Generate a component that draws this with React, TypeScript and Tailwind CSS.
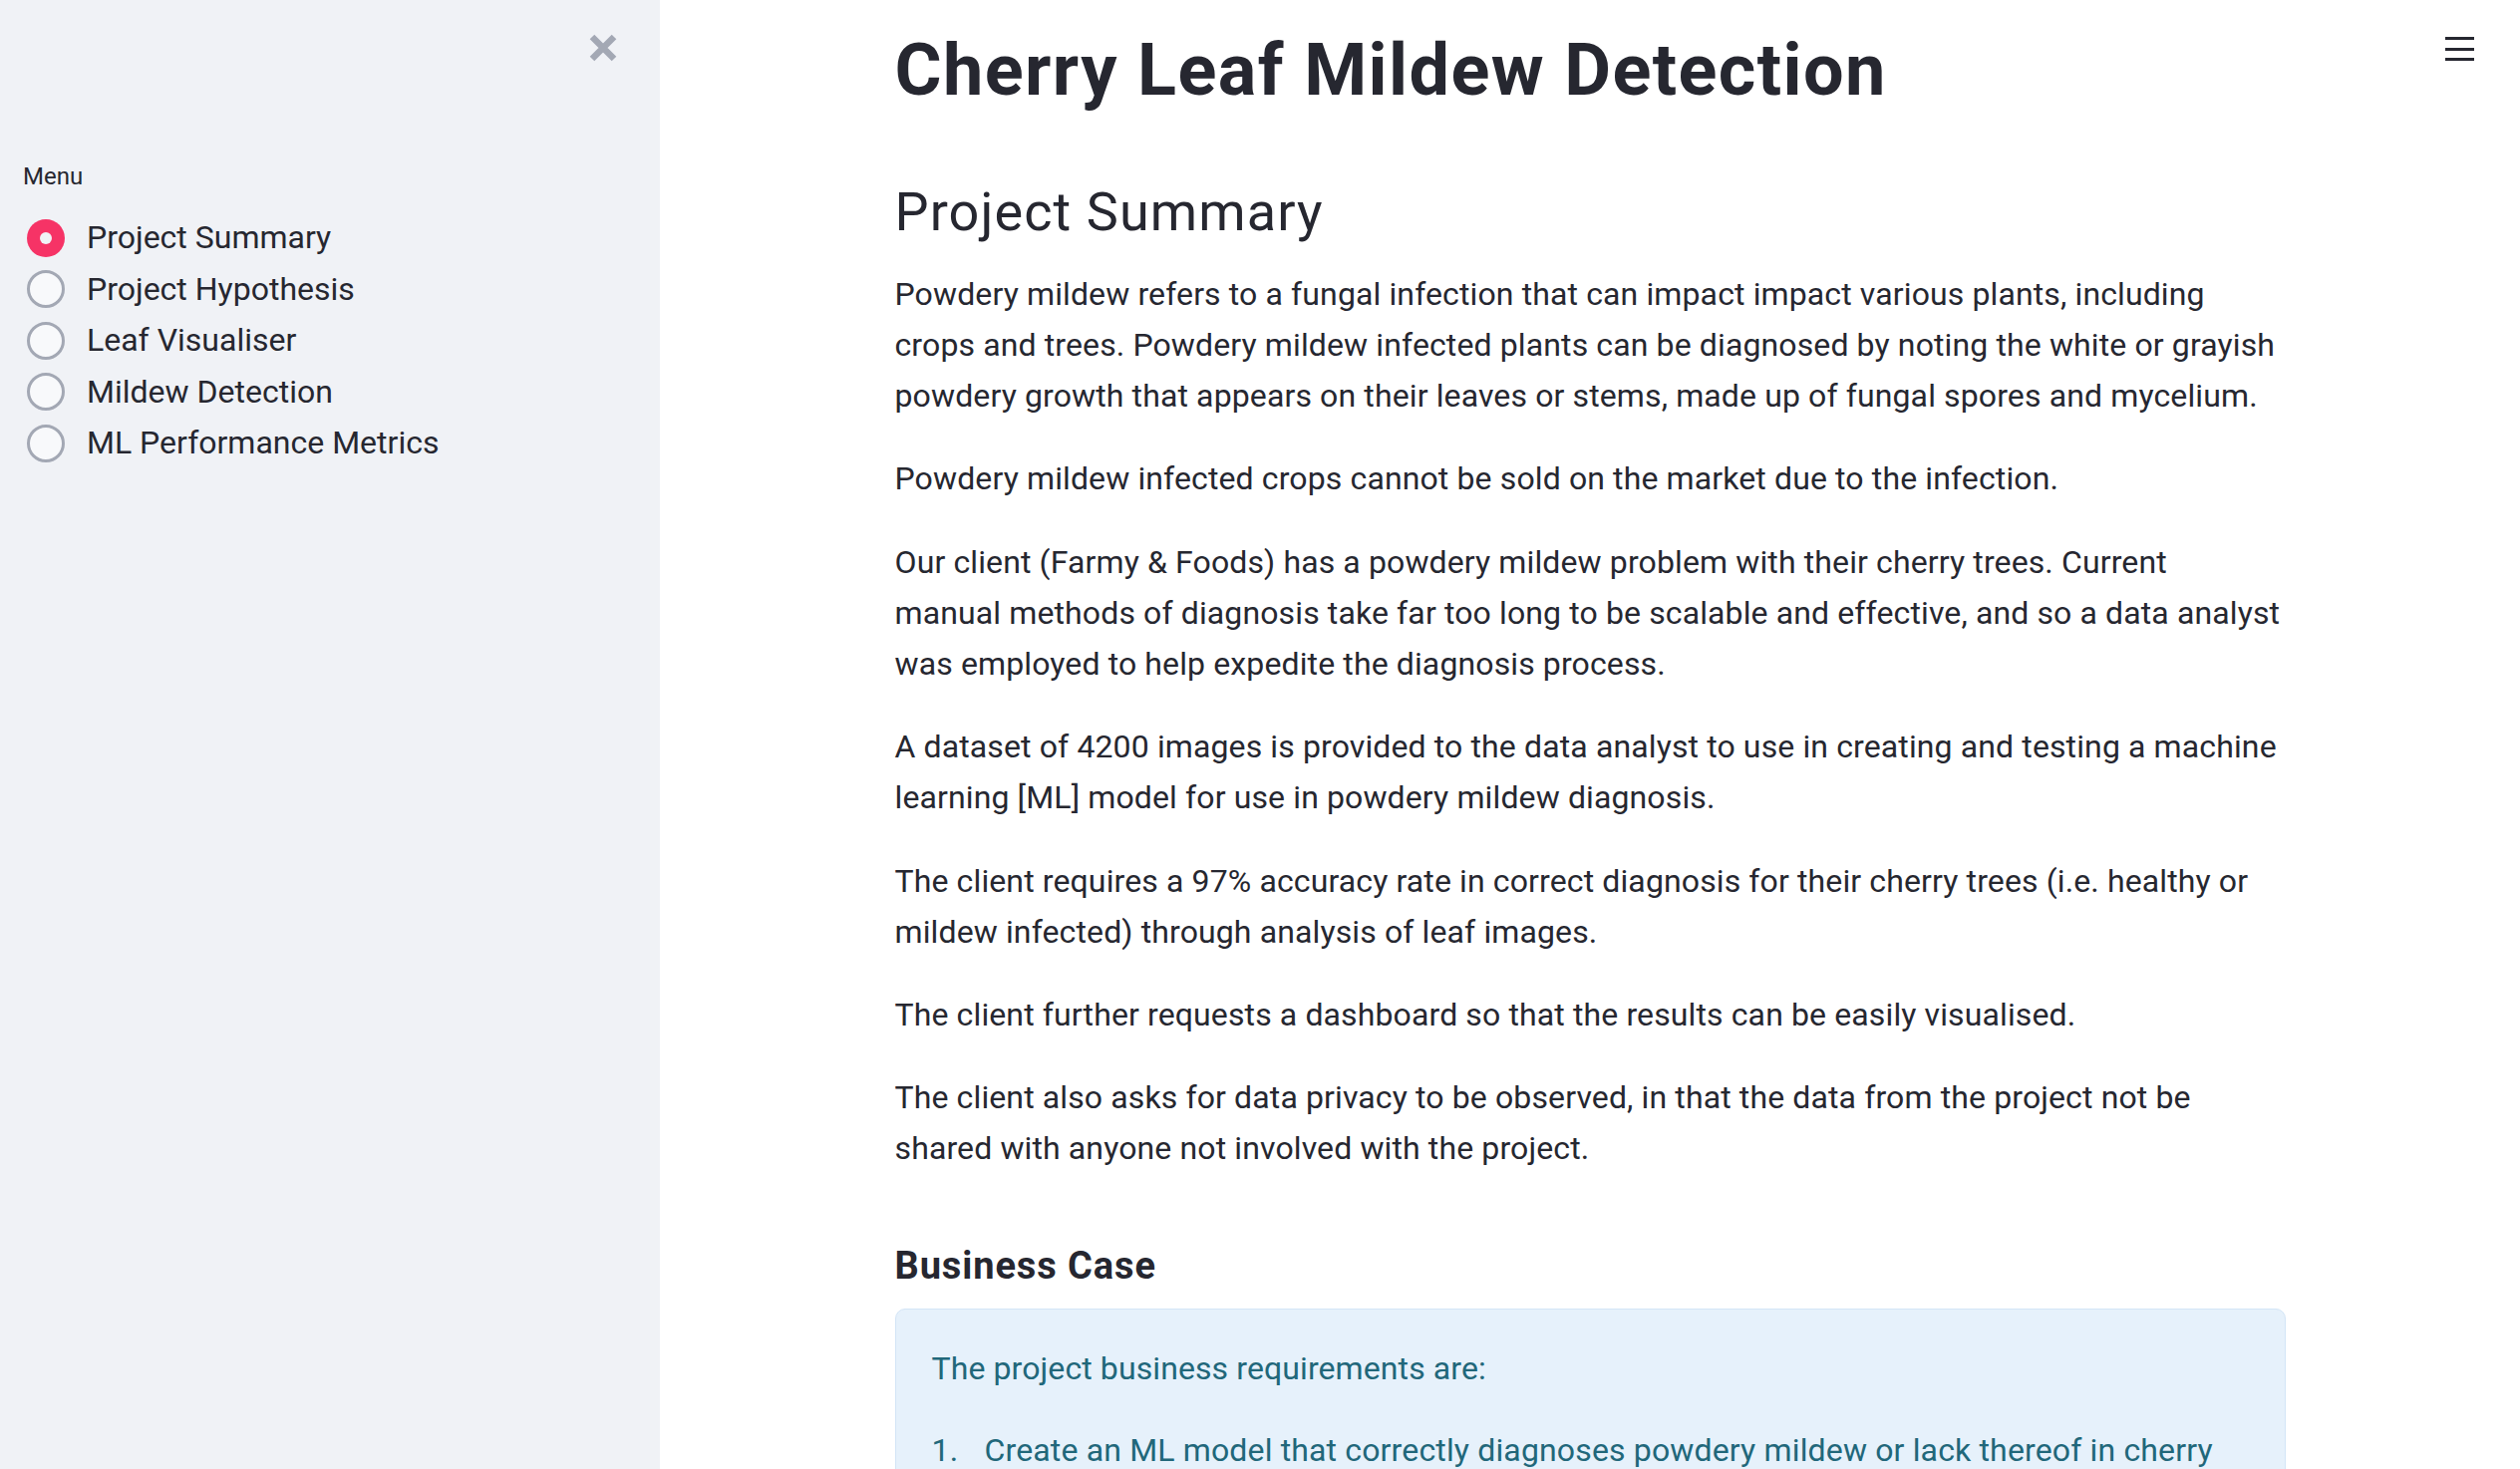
const font = { fontFamily: 'Roboto, "Noto Sans", sans-serif' };

const menuItems = [
  'Project Summary',
  'Project Hypothesis',
  'Leaf Visualiser',
  'Mildew Detection',
  'ML Performance Metrics',
];

// line breaks kept as in the original page
const paragraphs = [
  [
    'Powdery mildew refers to a fungal infection that can impact impact various plants, including',
    'crops and trees. Powdery mildew infected plants can be diagnosed by noting the white or grayish',
    'powdery growth that appears on their leaves or stems, made up of fungal spores and mycelium.',
  ],
  ['Powdery mildew infected crops cannot be sold on the market due to the infection.'],
  [
    'Our client (Farmy & Foods) has a powdery mildew problem with their cherry trees. Current',
    'manual methods of diagnosis take far too long to be scalable and effective, and so a data analyst',
    'was employed to help expedite the diagnosis process.',
  ],
  [
    'A dataset of 4200 images is provided to the data analyst to use in creating and testing a machine',
    'learning [ML] model for use in powdery mildew diagnosis.',
  ],
  [
    'The client requires a 97% accuracy rate in correct diagnosis for their cherry trees (i.e. healthy or',
    'mildew infected) through analysis of leaf images.',
  ],
  ['The client further requests a dashboard so that the results can be easily visualised.'],
  [
    'The client also asks for data privacy to be observed, in that the data from the project not be',
    'shared with anyone not involved with the project.',
  ],
];

function Radio({ label, selected }: { label: string; selected: boolean }) {
  return (
    <label className="flex h-[51.5px] items-center">
      {selected ? (
        <span className="ml-[4px] flex h-[38px] w-[38px] items-center justify-center rounded-full bg-[#f63366]">
          <span className="h-[12px] w-[12px] rounded-full bg-[#f0f2f6]" />
        </span>
      ) : (
        <span className="ml-[4px] h-[38px] w-[38px] rounded-full border-[3px] border-[#a3a8b4] bg-[#f8f9fb]" />
      )}
      <span className="ml-[22px] text-[32px] leading-[51.2px] text-[#262730]">{label}</span>
    </label>
  );
}

function CloseIcon() {
  return (
    <svg width="28" height="28" viewBox="0 0 28 28" fill="none">
      <path d="M3 3 L25 25 M25 3 L3 25" stroke="#a3a8b4" strokeWidth="6.5" />
    </svg>
  );
}

export default function App() {
  return (
    <div className="flex h-screen w-full overflow-hidden bg-white text-[#262730]" style={font}>
      <aside className="flex w-[662px] shrink-0 flex-col bg-[#f0f2f6] px-[23px]">
        <div className="flex justify-end pt-[34px] pr-[20px]">
          <button>
            <CloseIcon />
          </button>
        </div>
        <div className="mt-[99px] text-[24px] leading-[32px]">Menu</div>
        <div className="mt-[20px] flex flex-col">
          {menuItems.map((m, i) => (
            <Radio key={m} label={m} selected={i === 0} />
          ))}
        </div>
      </aside>

      <main className="relative flex-1 overflow-hidden">
        <button className="absolute right-[46px] top-[37px] flex w-[29px] flex-col gap-[7.5px]">
          <span className="h-[3px] w-full bg-[#262730]" />
          <span className="h-[3px] w-full bg-[#262730]" />
          <span className="h-[3px] w-full bg-[#262730]" />
        </button>

        <div className="mx-auto w-[1395px] pt-[28px]">
          <h1 className="text-[72px] font-bold leading-[86px] tracking-[1.4px]">Cherry Leaf Mildew Detection</h1>
          <h2 className="mt-[67px] text-[54px] leading-[64.8px] tracking-[1.1px]">Project Summary</h2>

          <div className="mt-[24px] flex flex-col gap-[32px]">
            {paragraphs.map((lines) => (
              <p key={lines[0]} className="whitespace-nowrap text-[32px] leading-[51.2px] tracking-[0.12px]">
                {lines.map((l, i) => (
                  <span key={i}>
                    {l}
                    {i < lines.length - 1 && <br />}
                  </span>
                ))}
              </p>
            ))}
          </div>

          <h3 className="mt-[69px] text-[38px] font-bold leading-[45.6px] tracking-[0.9px]">Business Case</h3>

          <div className="mt-[20px] rounded-[10px] border border-[#d3e5f6] bg-[#e6f1fb] px-[36px] pt-[34px] pb-[40px] text-[#21677a]">
            <p className="text-[32px] leading-[51.2px] tracking-[0.1px]">The project business requirements are:</p>
            <div className="mt-[31px] flex text-[32px] leading-[51.2px] tracking-[0.15px]">
              <span className="w-[53px] shrink-0">1.</span>
              <span>Create an ML model that correctly diagnoses powdery mildew or lack thereof in cherry leaves.</span>
            </div>
          </div>
        </div>
      </main>
    </div>
  );
}
